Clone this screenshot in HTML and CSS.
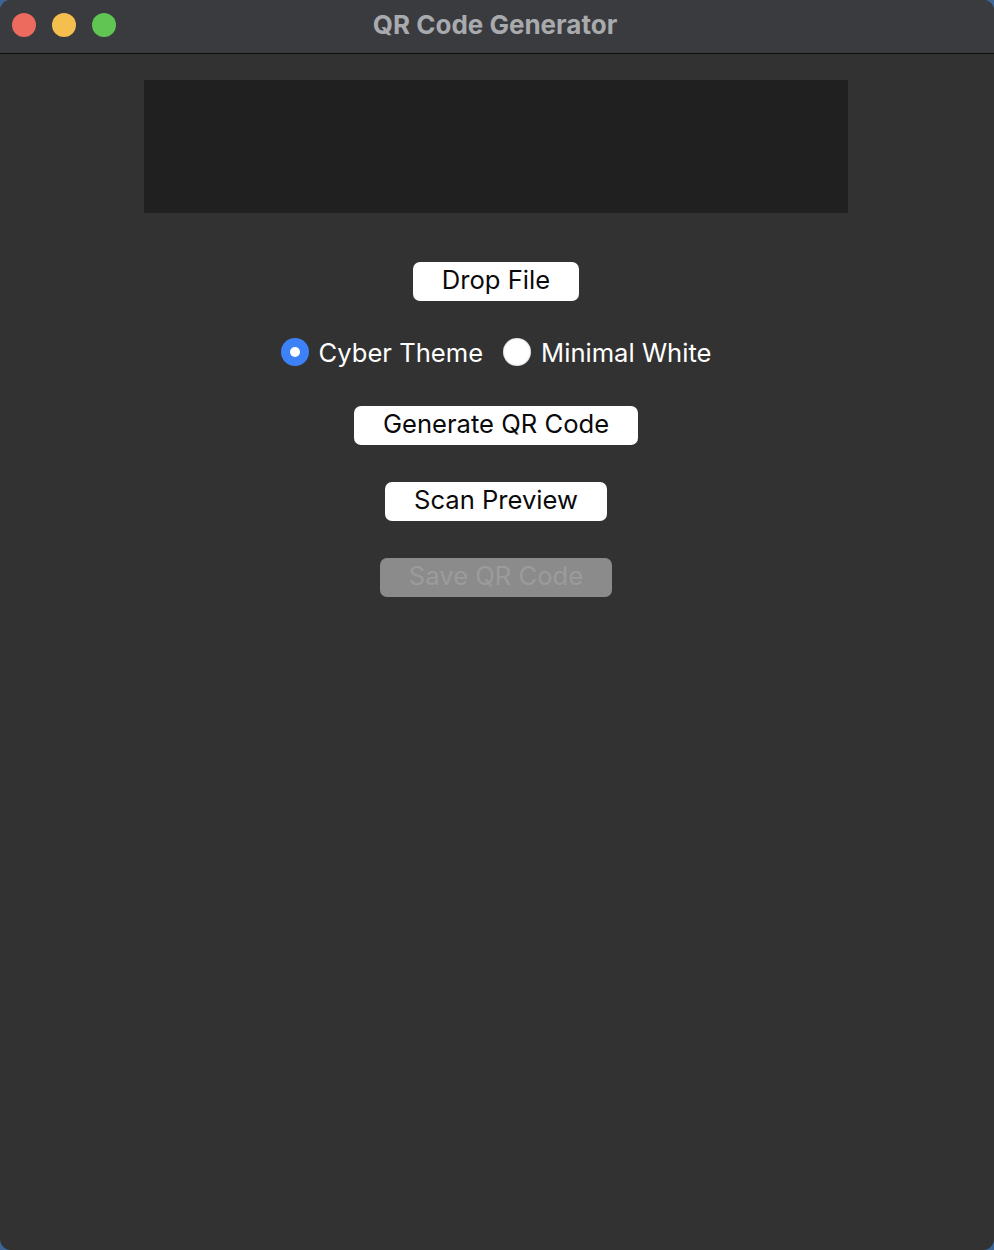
FILE: index.html
```html
<!DOCTYPE html>
<html>
<head>
<meta charset="utf-8">
<link rel="stylesheet" href="styles.css">
</head>
<body>
<div class="window">
  <div class="titlebar">
    <div class="lights">
      <span class="light red"></span>
      <span class="light yellow"></span>
      <span class="light green"></span>
    </div>
    <div class="title">QR Code Generator</div>
  </div>
  <div class="content">
    <div class="preview"></div>
    <button class="btn btn-drop">Drop File</button>
    <div class="radios">
      <label class="radio"><span class="dot checked"></span><span class="rlabel">Cyber Theme</span></label>
      <label class="radio"><span class="dot"></span><span class="rlabel">Minimal White</span></label>
    </div>
    <button class="btn btn-gen">Generate QR Code</button>
    <button class="btn btn-scan">Scan Preview</button>
    <button class="btn btn-save" disabled>Save QR Code</button>
  </div>
</div>
</body>
</html>
```
FILE: styles.css
```css
html, body {
  margin: 0;
  padding: 0;
  background: #3d6596;
}
body {
  width: 994px;
  height: 1250px;
  overflow: hidden;
  font-family: Inter, "Liberation Sans", sans-serif;
}
.window {
  width: 994px;
  height: 1250px;
  background: #323232;
  border-radius: 11px;
  overflow: hidden;
  display: flex;
  flex-direction: column;
}
.titlebar {
  height: 53px;
  flex: 0 0 53px;
  background: #3a3b3f;
  border-bottom: 1px solid #0c0c0c;
  display: flex;
  align-items: center;
  justify-content: center;
  position: relative;
}
.lights {
  position: absolute;
  left: 12px;
  top: 13px;
  display: flex;
  gap: 16px;
}
.light {
  width: 24px;
  height: 24px;
  border-radius: 50%;
  display: block;
}
.red { background: #ed6a5e; }
.yellow { background: #f5bf4f; }
.green { background: #61c554; }
.title {
  color: #a9aaae;
  font-weight: 700;
  font-size: 26px;
  margin-top: -5px;
  margin-right: 4px;
}
.content {
  display: flex;
  flex-direction: column;
  align-items: center;
  padding-right: 2px;
}
.preview {
  margin-top: 26px;
  width: 704px;
  height: 133px;
  background: #202020;
}
.btn {
  font-family: Inter, "Liberation Sans", sans-serif;
  font-size: 25.6px;
  height: 39px;
  padding: 0 29px 3px;
  border: none;
  border-radius: 7px;
  background: #ffffff;
  color: #0a0a0a;
  line-height: 36px;
}
.btn-drop { margin-top: 49px; }
.radios {
  margin-top: 37px;
  height: 28px;
  display: flex;
  align-items: center;
  gap: 20px;
}
.radio {
  display: flex;
  align-items: center;
  gap: 10px;
  color: #ffffff;
  font-size: 25.6px;
}
.dot {
  width: 28px;
  height: 28px;
  border-radius: 50%;
  background: #ffffff;
  box-shadow: inset 0 0 2px rgba(0,0,0,0.35);
  display: flex;
  align-items: center;
  justify-content: center;
}
.dot.checked {
  background: #3c82f6;
  box-shadow: none;
}
.dot.checked::after {
  content: "";
  width: 10px;
  height: 10px;
  border-radius: 50%;
  background: #ffffff;
}
.btn-gen { margin-top: 40px; }
.btn-scan { margin-top: 37px; }
.btn-save {
  margin-top: 37px;
  background: #8b8b8b;
  color: #9b9b9b;
}
```
